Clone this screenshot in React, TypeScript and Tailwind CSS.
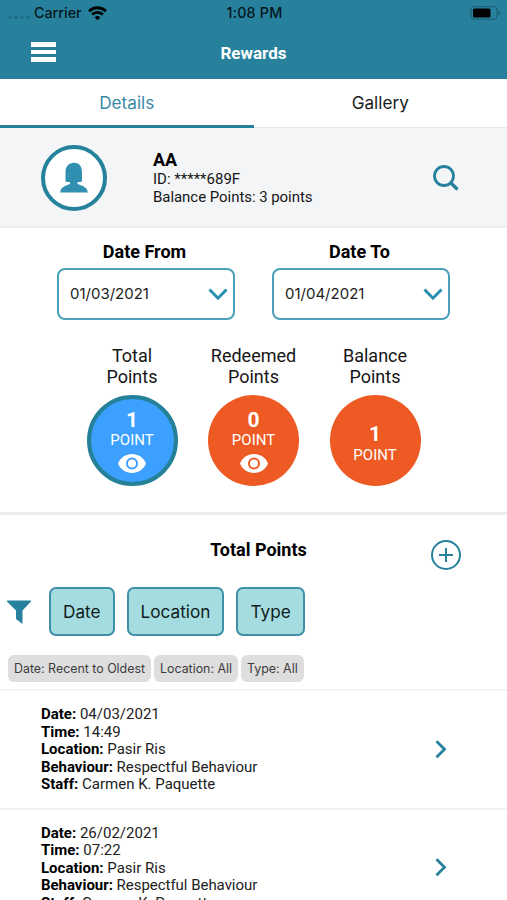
import type { ReactNode } from 'react';

const inter = "font-['Inter','Liberation_Sans',sans-serif]";

interface RewardEntry {
  date: string;
  time: string;
  location: string;
  behaviour: string;
  staff: string;
}

const entries: RewardEntry[] = [
  {
    date: '04/03/2021',
    time: '14:49',
    location: 'Pasir Ris',
    behaviour: 'Respectful Behaviour',
    staff: 'Carmen K. Paquette',
  },
  {
    date: '26/02/2021',
    time: '07:22',
    location: 'Pasir Ris',
    behaviour: 'Respectful Behaviour',
    staff: 'Carmen K. Paquette',
  },
];

function StatusBar() {
  return (
    <div className={`grid h-[27px] grid-cols-3 items-center pb-[1px] pl-2 pr-[6px] text-[14.3px] font-medium text-[#06161c] ${inter}`}>
      <div className="flex items-center">
        <div className="mt-2 flex gap-[2px]">
          {[0, 1, 2, 3].map((dot) => (
            <span key={dot} className="h-[3px] w-[4px] rounded-full bg-[#206e87]" />
          ))}
        </div>
        <span className="ml-[4px]">Carrier</span>
        <svg className="ml-[6px]" width="19" height="15" viewBox="0 0 19 15" fill="none" stroke="#000" strokeWidth="2.8">
          <path d="M1 5.2a12.2 12.2 0 0 1 17 0" />
          <path d="M4.1 8.6a7.8 7.8 0 0 1 10.8 0" />
          <path d="M9.5 14.2 6.7 11.4a4 4 0 0 1 5.6 0z" fill="#000" stroke="none" />
        </svg>
      </div>
      <span className="text-center tracking-[0.2px]">1:08 PM</span>
      <svg className="justify-self-end" width="31" height="14" viewBox="0 0 31 14">
        <rect x="1" y="0.7" width="26" height="12.6" rx="3.5" fill="none" stroke="#1b5f74" strokeWidth="1.1" />
        <rect x="3" y="2.5" width="17.5" height="9" rx="1.5" fill="#000" />
        <path d="M28.5 4.8v4.4c1.2-.4 1.8-1.2 1.8-2.2s-.6-1.8-1.8-2.2z" fill="#1b5f74" />
      </svg>
    </div>
  );
}

function Header() {
  return (
    <header className="h-[79px] bg-[#27819d]">
      <StatusBar />
      <div className="grid h-[52px] grid-cols-3 items-center px-[31px]">
        <button className="flex w-[25px] -translate-y-[1px] flex-col gap-[3px]">
          <span className="h-[4.5px] w-full bg-white" />
          <span className="h-[4.5px] w-full bg-white" />
          <span className="h-[4.5px] w-full bg-white" />
        </button>
        <h1 className="pt-[2px] text-center text-[17px] font-bold text-white">Rewards</h1>
      </div>
    </header>
  );
}

function Tabs() {
  return (
    <nav className={`grid h-[49px] grid-cols-2 text-[17.2px] ${inter}`}>
      <button className="border-b-[3px] border-[#27819d] pt-[2px] text-[#398ba8]">Details</button>
      <button className="border-b border-[#e8e8e8] text-[#1c1c1e]">Gallery</button>
    </nav>
  );
}

function Profile() {
  return (
    <section className="flex h-[100px] items-center border-b-2 border-[#eceeef] bg-[#f3f5f7] pl-[41px] pr-[48px] pt-[1px]">
      <div className="flex size-[66px] items-center justify-center rounded-full border-4 border-[#24839a] bg-white">
        <svg width="28" height="31" viewBox="0 0 28 31" fill="#318fb1">
          <path d="M5.5 19.500V10C5.500 4.500 8.500 1.500 11.800 1.200c.8-.4 1.500-.4 2.500-.4 5 0 7.700 3.800 7.700 9.500v9.200c-1.200.5-2.800.7-4.500.7v1.800c4 1.500 10.200 2.800 10.200 8.500H.3c0-5.700 6-7 9.700-8.500v-1.800c-1.700 0-3.300-.2-4.500-.7z" />
        </svg>
      </div>
      <div className="ml-[46px] text-[15px] leading-[17.5px] text-[#161616]">
        <p className="text-[18px] font-bold leading-[21px] text-black">AA</p>
        <p className="pt-[1px]">ID: *****689F</p>
        <p className="tracking-[-0.05px]">Balance Points: 3 points</p>
      </div>
      <svg className="ml-auto" width="26" height="26" viewBox="0 0 26 26" fill="none" stroke="#27819d" strokeWidth="2.8">
        <circle cx="11" cy="11" r="9.5" />
        <path d="m17.500 17.500 7 7" strokeWidth="3.400" />
      </svg>
    </section>
  );
}

function DateField({ label, value }: { label: string; value: string }) {
  return (
    <div className="w-[178px]">
      <p className="mr-[3px] text-center text-[18px] font-bold leading-[21px] text-black">{label}</p>
      <button className="mt-[6px] flex h-[52px] w-full items-center justify-between rounded-[8px] border-2 border-[#4ba1b9] pl-[11px] pr-[5px]">
        <span className={`text-[15px] text-[#222] ${inter}`}>{value}</span>
        <svg width="20" height="13" viewBox="0 0 20 13" fill="none" stroke="#2a8eaf" strokeWidth="3">
          <path d="m1.500 1.500 8.500 8.700 8.500-8.700" />
        </svg>
      </button>
    </div>
  );
}

function EyeIcon() {
  return (
    <svg className="mt-[5px]" width="28" height="19" viewBox="0 0 28 19" fill="none">
      <path d="M0 9.500C2.300 3.700 7.700 0 14 0s11.700 3.700 14 9.500C25.700 15.300 20.300 19 14 19S2.300 15.300 0 9.500z" fill="#fff" />
      <circle cx="14" cy="9.500" r="5" stroke="currentColor" strokeWidth="2" />
    </svg>
  );
}

interface PointCircleProps {
  label: string;
  value: number;
  color: string;
  viewable?: boolean;
}

function PointCircle({ label, value, color, viewable }: PointCircleProps) {
  return (
    <div className="flex w-[91px] flex-col items-center">
      <p className="text-center text-[18px] leading-[21px] text-[#161616]">
        {label}
        <br />
        Points
      </p>
      <div className={`mt-[8px] flex size-[91px] flex-col items-center justify-center rounded-full ${color}`}>
        <span className={`text-[21px] font-bold text-white ${viewable ? 'pt-[1px] leading-[22px]' : 'pt-[6px] leading-[23px]'}`}>{value}</span>
        <span className="text-[15px] leading-[18px] text-white">POINT</span>
        {viewable && <EyeIcon />}
      </div>
    </div>
  );
}

function FilterButton({ children }: { children: ReactNode }) {
  return (
    <button className={`h-[49px] rounded-[7px] border-2 border-[#408fa9] bg-[#a5dce0] px-[12px] text-[17.2px] text-[#101c20] ${inter}`}>
      {children}
    </button>
  );
}

function Chip({ children }: { children: ReactNode }) {
  return (
    <span className={`flex h-[27px] items-center rounded-[6px] bg-[#dedede] px-[6px] pt-[2px] text-[12.4px] text-[#3c3c3c] ${inter}`}>
      {children}
    </span>
  );
}

function EntryRow({ entry }: { entry: RewardEntry }) {
  return (
    <li className="flex h-[118.500px] items-center justify-between border-t-2 border-[#f3f3f3] pl-[41px] pr-[60px]">
      <div className="pt-[1.500px] text-[15px] leading-[17.600px] text-[#222] [&_b]:text-black">
        <p><b>Date:</b> {entry.date}</p>
        <p><b>Time:</b> {entry.time}</p>
        <p><b>Location:</b> {entry.location}</p>
        <p className="tracking-[-0.03px]"><b>Behaviour:</b> {entry.behaviour}</p>
        <p><b>Staff:</b> {entry.staff}</p>
      </div>
      <svg width="12" height="19" viewBox="0 0 12 19" fill="none" stroke="#27819d" strokeWidth="2.800">
        <path d="m1.500 1.200 8 8-8 8" />
      </svg>
    </li>
  );
}

export default function App() {
  return (
    <div className="h-[900px] w-[507px] overflow-hidden bg-white font-['Roboto','Liberation_Sans',sans-serif]">
      <Header />
      <Tabs />
      <Profile />

      {/* Date range and totals */}
      <section className="h-[287px] border-b-[3px] border-[#ededee] pt-[13px]">
        <div className="flex justify-center gap-[37px]">
          <DateField label="Date From" value="01/03/2021" />
          <DateField label="Date To" value="01/04/2021" />
        </div>
        <div className="mt-[25px] flex justify-center gap-[30.500px]">
          <PointCircle label="Total" value={1} color="border-[4px] border-[#248198] bg-[#3ba0ff] text-[#3ba0ff]" viewable />
          <PointCircle label="Redeemed" value={0} color="bg-[#ee5a23] text-[#ee5a23]" viewable />
          <PointCircle label="Balance" value={1} color="bg-[#ee5a23] text-[#ee5a23]" />
        </div>
      </section>

      {/* Filters */}
      <section className="h-[174px]">
        <div className="grid h-[72px] grid-cols-[1fr_auto_1fr] items-center pt-[7px]">
          <h2 className="col-start-2 -translate-y-[5px] pl-[10px] text-[18px] font-bold text-black">Total Points</h2>
          <svg className="mr-[46px] justify-self-end" width="30" height="30" viewBox="0 0 30 30" fill="none" stroke="#27819d" strokeWidth="2">
            <circle cx="15" cy="15" r="14" />
            <path d="M15 8v14M8 15h14" />
          </svg>
        </div>
        <div className="flex items-center pl-[7px]">
          <svg className="mr-[18px]" width="24" height="24" viewBox="0 0 24 24" fill="#27819d">
            <path d="M0 .5h24v1L15.500 10.500V24L9 19V10.500L0 1.500z" />
          </svg>
          <div className="flex gap-[12px]">
            <FilterButton>Date</FilterButton>
            <FilterButton>Location</FilterButton>
            <FilterButton>Type</FilterButton>
          </div>
        </div>
        <div className="mt-[19px] flex gap-[3px] pl-[8px]">
          <Chip>Date: Recent to Oldest</Chip>
          <Chip>Location: All</Chip>
          <Chip>Type: All</Chip>
        </div>
      </section>

      <ul>
        {entries.map((entry) => (
          <EntryRow key={entry.date} entry={entry} />
        ))}
      </ul>
    </div>
  );
}
